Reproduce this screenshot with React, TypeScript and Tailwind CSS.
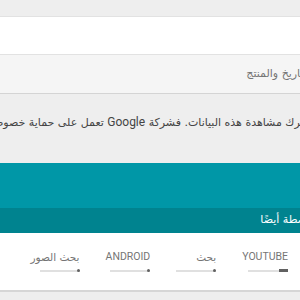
const arabic = "font-['DejaVu_Sans','Noto_Sans',sans-serif]";
const latin = "font-['Roboto','Noto_Sans',sans-serif]";

const products = [
  { label: 'YOUTUBE', active: true, latin: true },
  { label: 'بحث', active: false, latin: false },
  { label: 'ANDROID', active: false, latin: true },
  { label: 'بحث الصور', active: false, latin: false },
];

export default function App() {
  return (
    <div dir="rtl" className="h-[300px] w-[300px] overflow-hidden bg-[#eeeeee] pt-4">
      {/* search box + filter bar */}
      <div className="h-[39px] border-t border-b border-[#e2e2e2] bg-white" />
      <div className="flex h-[39px] items-center border-b border-[#d4d4d4] bg-[#f5f5f5]">
        <span className={`-mr-[72px] whitespace-nowrap text-[11px] text-[#757575] ${arabic}`}>
          تصفية حسب التاريخ والمنتج
        </span>
      </div>

      <div className="h-[69px] pt-[18px]">
        <p className={`-mr-[69px] whitespace-nowrap text-[11px] leading-5 text-[#444444] ${arabic}`}>
          لا يمكن لأحد غيرك مشاهدة هذه البيانات. فشركة <span className={`${latin} text-[12px]`}>Google</span> تعمل على حماية خصوصيتك وأمانك.
        </p>
      </div>

      {/* activity card */}
      <div className="h-[45px] bg-[#0097a7]" />
      <div className="flex h-[25px] items-center bg-[#00838f]">
        <span className={`-mr-[79px] whitespace-nowrap text-[11px] text-white ${arabic}`}>
          يمكنك حذف الأنشطة أيضًا
        </span>
      </div>
      <div className="flex h-[59px] gap-[26px] border-b-2 border-[#d6d6d6] bg-white pr-3 pt-[17px]">
        {products.map((item) => (
          <div key={item.label} className="flex min-w-10 flex-col items-start">
            <span className={`whitespace-nowrap text-[10.5px] leading-[14px] text-[#757575] ${item.latin ? latin : arabic}`}>
              {item.label}
            </span>
            <div className="mt-[5px] flex h-[3px] w-10 items-center">
              <div className="flex h-[2px] w-full items-center bg-[#e0e0e0]">
                <div className={`${item.active ? 'w-[9px]' : 'w-[3px] rounded-full'} h-[3px] bg-[#616161]`} />
              </div>
            </div>
          </div>
        ))}
      </div>
    </div>
  );
}
